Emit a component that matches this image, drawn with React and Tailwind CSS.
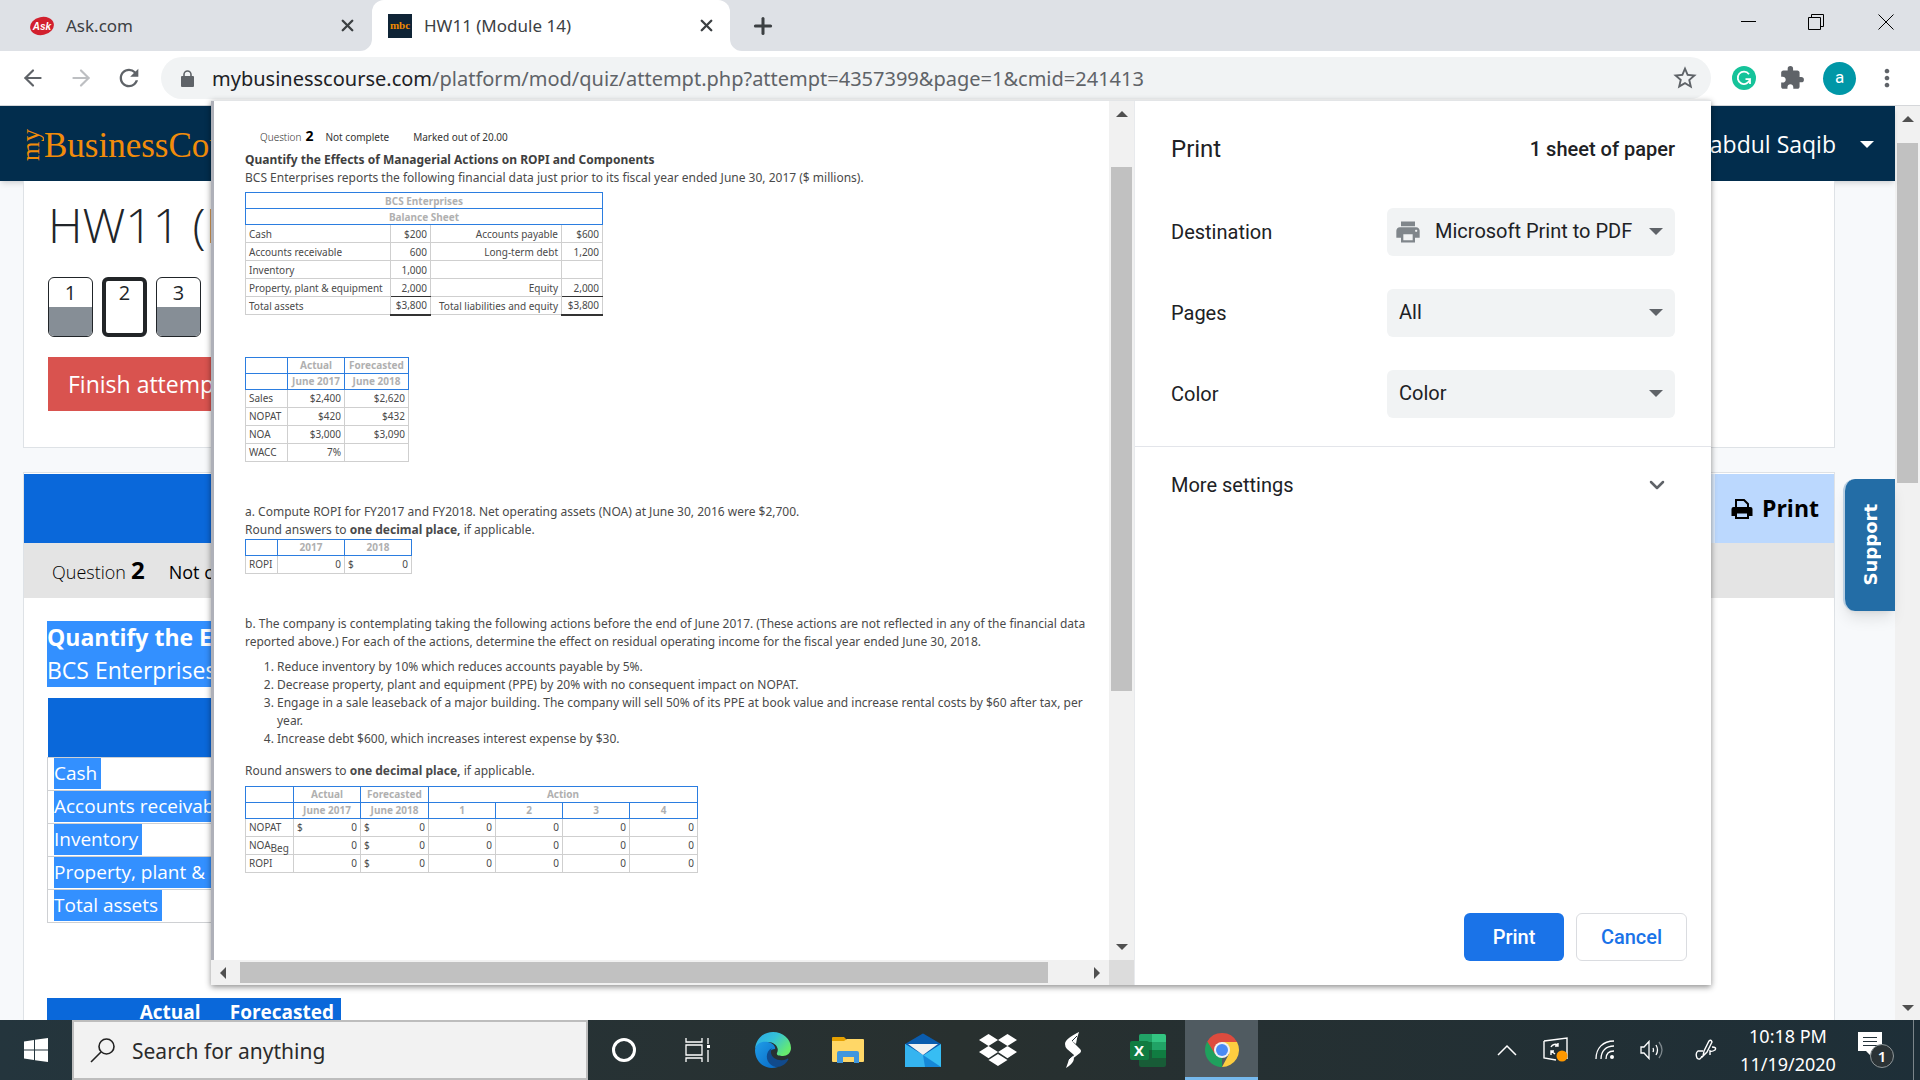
import {
  ArrowLeft,
  ArrowRight,
  ChevronDown,
  Plus,
  X,
} from "lucide-react";
import {
  MdExtension,
  MdMoreVert,
  MdPrint,
  MdRefresh,
  MdStarBorder,
} from "react-icons/md";
import { FaDropbox } from "react-icons/fa";

const blueCell = "h-4 border border-[#2b7de0] px-[3px] text-center font-bold text-[#b0b0b0]";
const greyCell = "h-[18px] border border-[#cfcfcf] px-[3px]";

function Triangle({ dir, size = 12, className }) {
  const points = {
    up: "0,6 6,0 12,6",
    down: "0,0 12,0 6,6",
    left: "6,0 6,12 0,6",
    right: "0,0 6,6 0,12",
  };
  const tall = dir === "left" || dir === "right";
  return (
    <svg
      width={tall ? size / 2 : size}
      height={tall ? size : size / 2}
      viewBox={tall ? "0 0 6 12" : "0 0 12 6"}
      className={className}
      aria-hidden="true"
    >
      <polygon points={points[dir]} fill="currentColor" />
    </svg>
  );
}

function TabStrip() {
  return (
    <div className="flex h-[51px] shrink-0 items-stretch bg-[#dee1e6] text-[#3c4043]">
      <div className="flex w-[372px] items-center pr-[15px] pl-[29px]">
        <svg width="26" height="20" viewBox="0 0 26 20" aria-hidden="true">
          <ellipse cx="13" cy="10" rx="12" ry="9" fill="#d2202e" transform="rotate(-12 13 10)" />
          <text x="13" y="14" textAnchor="middle" fontSize="10" fontWeight="bold" fontStyle="italic" fill="#fff" fontFamily="Liberation Sans, sans-serif">
            Ask
          </text>
        </svg>
        <span className="ml-[11px] flex-1 text-[17px]">Ask.com</span>
        <button aria-label="Close tab">
          <X size={19} strokeWidth={3} />
        </button>
      </div>
      <div className="relative flex w-[358px] items-center rounded-t-xl bg-white pr-[14px] pl-[16px]">
        <svg className="absolute bottom-0 -left-3" width="12" height="12" aria-hidden="true">
          <path d="M12 0V12H0A12 12 0 0 0 12 0Z" fill="#fff" />
        </svg>
        <svg className="absolute -right-3 bottom-0" width="12" height="12" aria-hidden="true">
          <path d="M0 0V12H12A12 12 0 0 1 0 0Z" fill="#fff" />
        </svg>
        <span className="flex h-6 w-6 items-center justify-center bg-[#0f2436] font-['Liberation_Serif',serif] text-[11px] font-bold text-[#f08a00]">
          mbc
        </span>
        <span className="ml-3 flex-1 text-[17px]">HW11 (Module 14)</span>
        <button aria-label="Close tab">
          <X size={19} strokeWidth={3} />
        </button>
      </div>
      <button aria-label="New tab" className="ml-5">
        <Plus size={26} strokeWidth={2.8} />
      </button>
      <div className="ml-auto flex items-center pr-[26px] pb-2 text-black">
        <button aria-label="Minimize" className="mr-[52px]">
          <svg width="15" height="16">
            <path d="M0 7.5H15" stroke="currentColor" />
          </svg>
        </button>
        <button aria-label="Restore" className="mr-[54px]">
          <svg width="16" height="16" fill="none" stroke="currentColor">
            <path d="M.5 3.5H12.5V15.5H.5ZM3.5 3.5V.5H15.5V12.5H12.5" />
          </svg>
        </button>
        <button aria-label="Close">
          <svg width="16" height="16" stroke="currentColor">
            <path d="M.5 .5L15.5 15.5M15.5 .5L.5 15.5" />
          </svg>
        </button>
      </div>
    </div>
  );
}

function Toolbar() {
  return (
    <div className="flex h-[55px] shrink-0 items-center border-b border-[#d5d7da] bg-white text-[#5f6368]">
      <button aria-label="Back" className="ml-5">
        <ArrowLeft size={26} />
      </button>
      <button aria-label="Forward" className="ml-[22px] text-[#bdbfc2]">
        <ArrowRight size={26} />
      </button>
      <button aria-label="Reload" className="ml-[21px]">
        <MdRefresh size={28} />
      </button>
      <div className="ml-[18px] flex h-[42px] flex-1 items-center rounded-full bg-[#f1f3f4] pr-3 pl-5">
        <svg width="13" height="17" viewBox="0 0 13 17" aria-hidden="true">
          <path d="M3 7V4.500A3.500 3.500 0 0 1 10 4.500V7" fill="none" stroke="currentColor" strokeWidth="1.6" />
          <rect y="6" width="13" height="11" rx="1" fill="currentColor" />
        </svg>
        <p className="ml-[18px] flex-1 pt-px text-[20px] text-[#5f6368]">
          <span className="text-[#202124]">mybusinesscourse.com</span>
          /platform/mod/quiz/attempt.php?attempt=4357399&amp;page=1&amp;cmid=241413
        </p>
        <button aria-label="Bookmark this page">
          <MdStarBorder size={28} />
        </button>
      </div>
      <button
        aria-label="Grammarly"
        className="ml-[21px] flex h-6 w-6 items-center justify-center rounded-full bg-[#15c39a]"
      >
        <svg width="16" height="16" viewBox="0 0 16 16" fill="none" stroke="#fff" strokeWidth="1.8" aria-hidden="true">
          <path d="M13 4.2A6.2 6.2 0 1 0 14 9.2H9.5M14 9V14" />
        </svg>
      </button>
      <button aria-label="Extensions" className="ml-[23px]">
        <MdExtension size={26} />
      </button>
      <button
        aria-label="Profile"
        className="ml-[18px] flex h-[33px] w-[33px] items-center justify-center rounded-full bg-[#0097a7] font-['Roboto',sans-serif] text-[17px] text-white"
      >
        a
      </button>
      <button aria-label="Menu" className="mr-[19px] ml-[17px]">
        <MdMoreVert size={28} />
      </button>
    </div>
  );
}

function QuizButton({ number, current }) {
  if (current) {
    return (
      <a
        href="#q2"
        className="h-[60px] w-[45px] rounded-md border-4 border-[#222528] bg-white text-center text-[20px] leading-[23px]"
      >
        {number}
      </a>
    );
  }
  return (
    <a
      href="#question"
      className="flex h-[60px] w-[45px] flex-col overflow-hidden rounded-md border border-[#212529] bg-white text-center text-[20px] leading-[29px]"
    >
      {number}
      <span className="flex-1 bg-[#868e96]" />
    </a>
  );
}

function CoursePage() {
  return (
    <div className="flex min-h-0 flex-1 overflow-hidden bg-[#f7f9fb] font-['Open_Sans','Noto_Sans',sans-serif] text-[#212529]">
      <div className="relative flex min-w-0 flex-1 flex-col">
        <header className="flex h-[75px] shrink-0 items-center bg-[#022d4d] pt-[2px] pr-[21px] pl-[21px] shadow-md">
          <div className="flex items-center gap-[3px] pt-1 font-['Liberation_Serif',serif] text-[#f28c0a]">
            <span className="rotate-180 pt-1 text-[25px] leading-[20px] [writing-mode:vertical-rl]">my</span>
            <span className="text-[35px]">BusinessCourse</span>
          </div>
          <button className="ml-auto flex items-center text-[23px] text-white">
            abdul Saqib
            <Triangle dir="down" size={14} className="ml-6" />
          </button>
        </header>
        <section className="mr-[60px] ml-[23px] h-[267px] shrink-0 border border-t-0 border-[#dee2e6] bg-white pl-6">
          <h1 className="pt-[11px] text-[48px] leading-[66px] font-light">HW11 (Module 14)</h1>
          <nav className="mt-[19px] flex gap-[9px]">
            <QuizButton number={1} />
            <QuizButton number={2} current />
            <QuizButton number={3} />
          </nav>
          <button className="mt-5 h-[54px] bg-[#d9534f] px-5 text-[23px] text-white">
            Finish attempt ...
          </button>
        </section>
        <section className="mt-6 mr-[60px] ml-[23px] flex-1 overflow-hidden border border-b-0 border-[#dee2e6] bg-white pt-px">
          <div className="flex h-[69px] justify-end bg-[#0a68da]">
            <button className="flex items-center border-l-[5px] border-[#dcebfd] bg-[#bbd8fe] pr-[15px] pl-4 text-[23px] font-bold text-black">
              <svg width="22" height="22" viewBox="0 0 22 22" className="mr-[9px]" fill="none" stroke="currentColor" strokeWidth="2" aria-hidden="true">
                <path d="M5 10V2H13L17 6V10" />
                <path d="M1.5 17V11Q1.5 10 2.5 10H19.5Q20.5 10 20.5 11V17H17V14H5V17Z" fill="currentColor" />
                <path d="M5 14.5H17V20H5Z" fill="#bbd8fe" />
              </svg>
              Print
            </button>
          </div>
          <div className="flex h-[55px] items-baseline bg-[#e4e4e4] pl-7 text-[18px] leading-[53px] text-black">
            <span className="font-light">Question</span>
            <b className="ml-[5px] text-[24px]">2</b>
            <span className="ml-6">Not complete</span>
          </div>
          <div className="mt-[23px] ml-[23px] w-[640px] text-white">
            <div className="bg-[#3390ff] text-[23px] leading-[33px]">
              <p className="overflow-hidden whitespace-nowrap">
                <b>Quantify the Effects of Managerial Actions</b>
              </p>
              <p>BCS Enterprises reports the following</p>
            </div>
            <table className="mt-[11px] w-full border-collapse text-[19px]">
              <thead>
                <tr className="h-[59px] bg-[#0a68da]">
                  <th>BCS Enterprises</th>
                </tr>
              </thead>
              <tbody>
                {["Cash", "Accounts receivable", "Inventory", "Property, plant & equipment", "Total assets"].map((label) => (
                  <tr key={label} className="h-[33px]">
                    <td className="border border-[#ced0d3] p-0 pl-[6px] leading-[31px]">
                      <span className="inline-block bg-[#3390ff] pr-1">{label}</span>
                    </td>
                  </tr>
                ))}
              </tbody>
            </table>
            <table className="mt-[75px] w-[294px] border-collapse text-[19px]">
              <thead>
                <tr className="bg-[#0a68da] leading-[29px]">
                  <th className="w-[78px]" />
                  <th className="pr-1 text-right">Actual</th>
                  <th className="pr-[7px] text-right">Forecasted</th>
                </tr>
              </thead>
            </table>
          </div>
        </section>
        <button className="absolute top-[373px] right-0 flex h-[132px] w-[52px] items-center justify-center rounded-l-xl border-l-2 border-[#b9cfe2] bg-[#236da6] shadow-lg">
          <span className="rotate-180 font-['DejaVu_Sans',sans-serif] text-[18px] font-bold text-white [writing-mode:vertical-rl]">
            Support
          </span>
        </button>
      </div>
      <div className="flex w-[25px] shrink-0 flex-col items-center bg-[#f1f1f1] text-[#505050]">
        <Triangle dir="up" className="mt-[10px]" />
        <div className="mt-[21px] h-[340px] w-[21px] bg-[#c1c1c1]" />
        <Triangle dir="down" className="mt-auto mb-[9px]" />
      </div>
    </div>
  );
}

const balanceRows = [
  ["Cash", "$200", "Accounts payable", "$600"],
  ["Accounts receivable", "600", "Long-term debt", "1,200"],
  ["Inventory", "1,000", "", ""],
  ["Property, plant & equipment", "2,000", "Equity", "2,000"],
  ["Total assets", "$3,800", "Total liabilities and equity", "$3,800"],
];

const forecastRows = [
  ["Sales", "$2,400", "$2,620"],
  ["NOPAT", "$420", "$432"],
  ["NOA", "$3,000", "$3,090"],
  ["WACC", "7%", ""],
];

function Columns({ widths }) {
  return (
    <colgroup>
      {widths.map((width, i) => (
        <col key={i} style={{ width }} />
      ))}
    </colgroup>
  );
}

function BalanceSheet() {
  return (
    <table className="mt-[5px] w-[357px] table-fixed border-collapse text-[10px] leading-[14px] whitespace-nowrap">
      <Columns widths={[145, 40, 131, 41]} />
      <thead>
        <tr>
          <th colSpan={4} className={blueCell}>BCS Enterprises</th>
        </tr>
        <tr>
          <th colSpan={4} className={blueCell}>Balance Sheet</th>
        </tr>
      </thead>
      <tbody>
        {balanceRows.map((row, r) => (
          <tr key={row[0]}>
            {row.map((text, c) => (
              <td
                key={c}
                className={`${greyCell} ${c > 0 ? "text-right" : ""} ${
                  c % 2 === 1 && r > 2 ? "border-b-[#333]" : ""
                } ${c % 2 === 1 && r === 4 ? "border-b-2" : ""}`}
              >
                {text}
              </td>
            ))}
          </tr>
        ))}
      </tbody>
    </table>
  );
}

function ForecastTable() {
  return (
    <table className="mt-[41px] w-[163px] table-fixed border-collapse text-[10px] leading-[14px] whitespace-nowrap">
      <Columns widths={[42, 57, 64]} />
      <thead>
        <tr>
          <th className={blueCell} />
          <th className={blueCell}>Actual</th>
          <th className={blueCell}>Forecasted</th>
        </tr>
        <tr>
          <th className={blueCell} />
          <th className={blueCell}>June 2017</th>
          <th className={blueCell}>June 2018</th>
        </tr>
      </thead>
      <tbody>
        {forecastRows.map(([label, actual, forecast]) => (
          <tr key={label}>
            <td className={greyCell}>{label}</td>
            <td className={`${greyCell} text-right`}>{actual}</td>
            <td className={`${greyCell} text-right`}>{forecast}</td>
          </tr>
        ))}
      </tbody>
    </table>
  );
}

function Amount({ dollar }) {
  return (
    <td className={greyCell}>
      <div className="flex justify-between">
        <span>{dollar ? "$" : ""}</span>
        <span>0</span>
      </div>
    </td>
  );
}

function RopiTable() {
  return (
    <table className="w-[166px] table-fixed border-collapse text-[10px] leading-[14px]">
      <Columns widths={[32, 67, 67]} />
      <thead>
        <tr>
          <th className={blueCell} />
          <th className={blueCell}>2017</th>
          <th className={blueCell}>2018</th>
        </tr>
      </thead>
      <tbody>
        <tr>
          <td className={greyCell}>ROPI</td>
          <Amount />
          <Amount dollar />
        </tr>
      </tbody>
    </table>
  );
}

function ActionTable() {
  return (
    <table className="mt-[6px] w-[452px] table-fixed border-collapse text-[10px] leading-[14px] whitespace-nowrap">
      <Columns widths={[48, 67, 68, 67, 67, 67, 68]} />
      <thead>
        <tr>
          <th className={blueCell} />
          <th className={blueCell}>Actual</th>
          <th className={blueCell}>Forecasted</th>
          <th colSpan={4} className={blueCell}>Action</th>
        </tr>
        <tr>
          <th className={blueCell} />
          <th className={blueCell}>June 2017</th>
          <th className={blueCell}>June 2018</th>
          {[1, 2, 3, 4].map((n) => (
            <th key={n} className={blueCell}>{n}</th>
          ))}
        </tr>
      </thead>
      <tbody>
        {["NOPAT", "NOA", "ROPI"].map((label) => (
          <tr key={label}>
            <td className={greyCell}>
              {label}
              {label === "NOA" && <sub className="text-[10px] leading-none">Beg</sub>}
            </td>
            <Amount dollar={label === "NOPAT"} />
            <Amount dollar />
            <Amount />
            <Amount />
            <Amount />
            <Amount />
          </tr>
        ))}
      </tbody>
    </table>
  );
}

function Preview() {
  return (
    <div className="flex min-w-0 flex-1 flex-col">
      <div className="flex min-h-0 flex-1">
        <div className="min-w-0 flex-1 overflow-hidden border-l-[3px] border-[#aeb0b8] bg-white pt-[26px] pr-1 pl-[31px] font-['Noto_Sans','Open_Sans',sans-serif] text-[12px] leading-[18px] text-[#4a4a4a]">
          <div className="flex items-baseline pl-[15px] text-[10px] text-[#333]">
            <span className="font-light">Question</span>
            <b className="ml-1 text-[14px] text-black">2</b>
            <span className="ml-3">Not complete</span>
            <span className="ml-6">Marked out of 20.00</span>
          </div>
          <h2 className="mt-[5px] font-bold text-[#3f3f3f]">
            Quantify the Effects of Managerial Actions on ROPI and Components
          </h2>
          <p>
            BCS Enterprises reports the following financial data just prior to its fiscal year ended June
            30, 2017 ($ millions).
          </p>
          <BalanceSheet />
          <ForecastTable />
          <p className="mt-[41px]">
            a. Compute ROPI for FY2017 and FY2018. Net operating assets (NOA) at June 30, 2016 were
            $2,700.
          </p>
          <p>
            Round answers to <b>one decimal place,</b> if applicable.
          </p>
          <RopiTable />
          <p className="mt-[41px]">
            b. The company is contemplating taking the following actions before the end of June 2017.
            (These actions are not reflected in any of the financial data reported above.) For each of
            the actions, determine the effect on residual operating income for the fiscal year ended June
            30, 2018.
          </p>
          <ol className="mt-[7px] list-decimal pl-8">
            <li>Reduce inventory by 10% which reduces accounts payable by 5%.</li>
            <li>Decrease property, plant and equipment (PPE) by 20% with no consequent impact on NOPAT.</li>
            <li>
              Engage in a sale leaseback of a major building. The company will sell 50% of its PPE at book
              value and increase rental costs by $60 after tax, per year.
            </li>
            <li>Increase debt $600, which increases interest expense by $30.</li>
          </ol>
          <p className="mt-[14px]">
            Round answers to <b>one decimal place,</b> if applicable.
          </p>
          <ActionTable />
        </div>
        <div className="flex w-[25px] shrink-0 flex-col items-center bg-[#f1f1f1] text-[#505050]">
          <Triangle dir="up" className="mt-[10px]" />
          <div className="mt-[50px] h-[524px] w-[21px] bg-[#c1c1c1]" />
          <Triangle dir="down" className="mt-auto mb-[10px]" />
        </div>
      </div>
      <div className="flex h-[25px] shrink-0 items-center bg-[#f1f1f1] text-[#505050]">
        <Triangle dir="left" className="ml-[9px]" />
        <div className="ml-[14px] h-[21px] w-[808px] bg-[#c1c1c1]" />
        <Triangle dir="right" className="mr-[9px] ml-auto" />
        <div className="h-full w-[25px] bg-[#dcdcdc]" />
      </div>
    </div>
  );
}

function Setting({ id, label, value, icon }) {
  return (
    <div className="flex h-12 items-center justify-between">
      <label htmlFor={id}>{label}</label>
      <div className="relative w-[288px]">
        {icon && <MdPrint size={28} className="absolute top-[10px] left-[7px] text-[#80868b]" />}
        <select
          id={id}
          className={`h-12 w-full appearance-none rounded-md bg-[#f1f3f4] pb-[2px] ${icon ? "pl-12" : "pl-3"}`}
        >
          <option>{value}</option>
        </select>
        <Triangle dir="down" size={14} className="pointer-events-none absolute top-5 right-3 text-[#5f6368]" />
      </div>
    </div>
  );
}

function PrintDialog() {
  return (
    <div className="absolute top-[100px] right-[209px] bottom-[95px] left-[211px] flex border-t border-[#e3e5e7] bg-white shadow-[0_2px_6px_rgba(0,0,0,0.45)]">
      <Preview />
      <form
        className="flex w-[577px] shrink-0 flex-col border-l border-[#e8eaed] font-['Roboto',sans-serif] text-[20px] text-[#202124]"
        onSubmit={(e) => e.preventDefault()}
      >
        <div className="flex items-center justify-between pt-8 pr-9 pl-9 leading-8">
          <h1 className="text-[24px]">Print</h1>
          <span className="font-medium">1 sheet of paper</span>
        </div>
        <div className="mt-[43px] flex flex-col gap-[33px] border-b border-[#e3e5ea] pr-9 pb-7 pl-9">
          <Setting id="destination" label="Destination" value="Microsoft Print to PDF" icon />
          <Setting id="pages" label="Pages" value="All" />
          <Setting id="color" label="Color" value="Color" />
        </div>
        <button type="button" className="flex h-[75px] items-center justify-between pr-[42px] pl-9">
          More settings
          <ChevronDown size={24} strokeWidth={2.5} className="text-[#5f6368]" />
        </button>
        <div className="mt-auto flex justify-end gap-3 pr-6 pb-6 font-medium">
          <button className="h-12 w-[100px] rounded-md bg-[#1a73e8] text-white">Print</button>
          <button type="button" className="h-12 w-[111px] rounded-md border border-[#dadce0] text-[#1a73e8]">
            Cancel
          </button>
        </div>
      </form>
    </div>
  );
}

function EdgeIcon() {
  return (
    <svg width="36" height="36" viewBox="0 0 36 36" aria-hidden="true">
      <defs>
        <linearGradient id="edgeTop" x1="0" y1="0" x2="1" y2="0.6">
          <stop offset="0" stopColor="#2aa8e8" />
          <stop offset="0.5" stopColor="#35c1d8" />
          <stop offset="1" stopColor="#66eb6e" />
        </linearGradient>
        <linearGradient id="edgeLow" x1="0" y1="0" x2="1" y2="1">
          <stop offset="0" stopColor="#1f9de8" />
          <stop offset="1" stopColor="#0868c4" />
        </linearGradient>
      </defs>
      <path d="M0 17C1 6 9 0 18 0C28 0 36 7 36 16C36 21 32 24 28 24C24 24 21 23 22 21C25 15 19 10 13 10C6 10 1 14 0 17Z" fill="url(#edgeTop)" />
      <path d="M0 18C1 11 7 9 13 10C18 11 21 15 20 17C15 17 12 22 14 27C16 32 20 35 23 35C10 39 0 30 0 18Z" fill="url(#edgeLow)" />
      <path d="M17 16C11 19 10 27 15 32C21 38 30 34 33 28C34 27 33 26 32 27C25 30 17 27 16 21C16 19 16 17 17 16Z" fill="#114a8b" />
    </svg>
  );
}

function FolderIcon() {
  return (
    <svg width="32" height="27" viewBox="0 0 32 27" aria-hidden="true">
      <path d="M0 1Q0 0 1 0H12L15 3V7H0Z" fill="#e5a000" />
      <path d="M0 4H12L15 2H31Q32 2 32 3V24Q32 25 31 25H1Q0 25 0 24Z" fill="#ffd767" />
      <path d="M5 26V16Q5 14 7 14H25Q27 14 27 16V26H22V20H11V26Z" fill="#3f96dd" />
    </svg>
  );
}

function MailIcon() {
  return (
    <svg width="36" height="34" viewBox="0 0 36 34" aria-hidden="true">
      <path d="M0 11L17 1Q18 0 19 1L36 11V22H0Z" fill="#0a5cae" />
      <path d="M0 11L36 34H0Z" fill="#2fa9ea" />
      <path d="M36 11L0 34H36Z" fill="#37bdf3" />
      <path d="M18 22L36 34H0V11Z" fill="#35b4f0" />
      <path d="M18 22L36 34H20Z" fill="#1688d8" />
      <path d="M3 11H33L18 22Z" fill="#f1f1f1" />
    </svg>
  );
}

function ExcelIcon() {
  return (
    <svg width="36" height="33" viewBox="0 0 36 33" aria-hidden="true">
      <rect x="9" width="27" height="33" rx="2" fill="#185c37" />
      <path d="M9 2Q9 0 11 0H22V8H9Z" fill="#21a366" />
      <path d="M22 0H34Q36 0 36 2V8H22Z" fill="#33c481" />
      <path d="M9 8H22V16H9Z" fill="#107c41" />
      <path d="M22 8H36V16H22Z" fill="#21a366" />
      <path d="M22 16H36V24H22Z" fill="#107c41" />
      <rect y="7" width="19" height="19" rx="2" fill="#107c41" />
      <text x="4" y="22" fontSize="15" fontWeight="bold" fill="#fff" fontFamily="Open Sans, sans-serif">
        X
      </text>
    </svg>
  );
}

function ChromeIcon() {
  return (
    <svg width="34" height="34" viewBox="0 0 34 34" aria-hidden="true">
      <path d="M17 17L17 34A17 17 0 0 1 2.3 8.5Z" fill="#1fa15d" />
      <path d="M17 9H32A17 17 0 0 1 17 34L24 21Z" fill="#fdcd40" />
      <path d="M17 9H32A17 17 0 0 0 2.3 8.5L10 21Z" fill="#dd4b3e" />
      <circle cx="17" cy="17" r="8" fill="#f1f1f1" />
      <circle cx="17" cy="17" r="6" fill="#4a8af4" />
    </svg>
  );
}

function TaskViewIcon() {
  return (
    <svg width="26" height="24" viewBox="0 0 26 24" fill="none" stroke="#fff" strokeWidth="1.3" aria-hidden="true">
      <path d="M1 0V4H17V0M1 7H17V17H1ZM1 24V20H17V24M23 0V6M23 12V24" />
      <rect x="22" y="7" width="3" height="3" fill="#fff" stroke="none" />
    </svg>
  );
}

function TaskButton({ label, active, children }) {
  return (
    <button
      aria-label={label}
      className={`flex items-center justify-center ${
        active ? "w-[73px] border-b-[3px] border-[#76b9ed] bg-[#505b61] pt-[3px]" : "w-[75px]"
      }`}
    >
      {children}
    </button>
  );
}

function Taskbar() {
  return (
    <footer className="flex h-[60px] shrink-0 items-stretch bg-linear-to-r from-[#24353d] via-[#28302f] to-[#1e2f38] text-white">
      <button aria-label="Start" className="flex w-[72px] items-center justify-center">
        <svg width="24" height="24" viewBox="0 0 24 24" fill="#fff" aria-hidden="true">
          <path d="M0 3.5L10 2V11.5H0ZM11 1.8L24 0V11.5H11ZM0 12.5H10V22L0 20.5ZM11 12.5H24V24L11 22.2Z" />
        </svg>
      </button>
      <label className="flex w-[516px] items-center border-2 border-[#bdbdbd] bg-[#f2f2f2] pl-4 text-[#222]">
        <svg width="26" height="25" viewBox="0 0 26 25" fill="none" stroke="currentColor" strokeWidth="1.6" aria-hidden="true">
          <circle cx="16.5" cy="8.5" r="7.5" />
          <path d="M11 14L1 24" />
        </svg>
        <input
          type="text"
          aria-label="Search"
          placeholder="Search for anything"
          className="ml-4 min-w-0 flex-1 bg-transparent pt-1 text-[21px] outline-none placeholder:text-[#2b2b2b]"
        />
      </label>
      <button aria-label="Cortana" className="flex w-[72px] items-center justify-center">
        <span className="h-6 w-6 rounded-full border-[3px] border-white" />
      </button>
      <TaskButton label="Task view">
        <TaskViewIcon />
      </TaskButton>
      <TaskButton label="Edge">
        <EdgeIcon />
      </TaskButton>
      <TaskButton label="File Explorer">
        <FolderIcon />
      </TaskButton>
      <TaskButton label="Mail">
        <MailIcon />
      </TaskButton>
      <TaskButton label="Dropbox">
        <FaDropbox size={38} />
      </TaskButton>
      <TaskButton label="Shortcut">
        <svg width="18" height="36" viewBox="0 0 18 36" fill="#fff" aria-hidden="true">
          <path d="M15 0C7 4 1 8 1 12Q1 15 3 17L10 23L7 28L16 21Q18 19 16 17L8 9Z" />
          <path d="M15 0C9 4 7 6 8 9L12 12Q13 5 15 0Z" />
          <path d="M2 36C10 31 11 27 9 24L5 27Q4 31 2 36Z" />
          <path d="M8 9L13 4M4 28L9 23" stroke="#28323a" strokeWidth="1" />
        </svg>
      </TaskButton>
      <TaskButton label="Excel">
        <ExcelIcon />
      </TaskButton>
      <TaskButton label="Chrome" active>
        <ChromeIcon />
      </TaskButton>
      <div className="ml-auto flex items-center">
        <svg width="20" height="12" viewBox="0 0 20 12" fill="none" stroke="#fff" strokeWidth="1.5" aria-hidden="true">
          <path d="M1 11L10 2L19 11" />
        </svg>
        <svg width="26" height="26" viewBox="0 0 26 26" fill="none" stroke="#fff" strokeWidth="1.4" className="ml-[26px]" aria-hidden="true">
          <path d="M1 4L24 1V22M1 4V21L13 23M8 10A5 5 0 0 1 15 8M15 6V9H12M8 18V14H11M8 14L12 17" />
          <circle cx="19" cy="19" r="5.5" fill="#ff9800" stroke="none" />
        </svg>
        <svg width="20" height="20" viewBox="0 0 20 20" fill="none" stroke="#fff" strokeWidth="1.3" className="ml-[26px]" aria-hidden="true">
          <path d="M1 19C1 8 8 1 19 1M6 19C6 11 11 6 19 6M11 19C11 14 14 11 19 11" />
          <circle cx="17" cy="17" r="2" fill="#fff" stroke="none" />
        </svg>
        <svg width="24" height="20" viewBox="0 0 24 20" fill="none" stroke="#fff" strokeWidth="1.3" className="ml-[25px]" aria-hidden="true">
          <path d="M1 7H4L9 1.500V18.500L4 13H1ZM13 8Q14 10 13 12M16 5Q19 10 16 15" />
          <path d="M19 2Q25 10 19 18" stroke="#7d878c" />
        </svg>
        <svg width="22" height="22" viewBox="0 0 22 22" fill="none" stroke="#fff" strokeWidth="1.4" className="ml-[31px]" aria-hidden="true">
          <path d="M8 17L9 12L14 2Q16 0 17 3L12 13ZM8 12H3Q0 14 2 19Q5 22 7 17M17 8Q22 8 20 11Q17 13 15 12V16" />
        </svg>
        <div className="ml-[19px] w-[104px] text-center text-[18px] leading-[28px]">
          <p>10:18 PM</p>
          <p>11/19/2020</p>
        </div>
        <button aria-label="1 new notification" className="relative ml-[18px] h-9 w-9">
          <svg width="24" height="24" viewBox="0 0 24 24" className="absolute top-0 left-0" aria-hidden="true">
            <path d="M0 0H24V19H13V24L8 19H0Z" fill="#fff" />
            <path d="M5 5.500H19M5 9.500H19M5 13.500H19" stroke="#24323a" />
          </svg>
          <span className="absolute right-0 bottom-0 flex h-6 w-6 items-center justify-center rounded-full border border-[#8f979a] bg-[#2b3336] text-[15px] font-semibold">
            1
          </span>
        </button>
        <div className="mr-[6px] ml-[19px] h-[60px] w-px bg-[#7b858a]" />
      </div>
    </footer>
  );
}

export default function App() {
  return (
    <div className="relative flex h-screen flex-col overflow-hidden font-['Noto_Sans','Open_Sans',sans-serif]">
      <TabStrip />
      <Toolbar />
      <CoursePage />
      <Taskbar />
      <PrintDialog />
    </div>
  );
}
